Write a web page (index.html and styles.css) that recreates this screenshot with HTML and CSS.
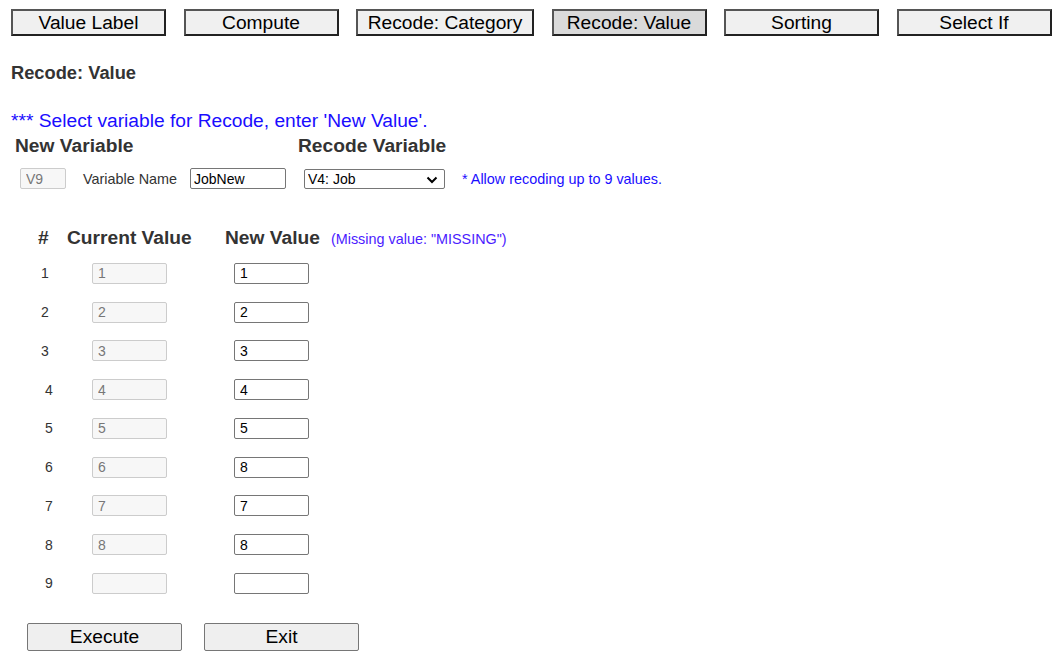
FILE: index.html
```html
<!DOCTYPE html>
<html lang="en">
<head>
    <meta charset="UTF-8">
    <meta name="viewport" content="width=device-width, initial-scale=1.0">
    <title>Recode: Value</title>
    <link rel="stylesheet" href="styles.css">
</head>
<body>
    <!-- Menu -->
    <div class="menu">
        <button class="menu-btn">Value Label</button>
        <button class="menu-btn">Compute</button>
        <button class="menu-btn wide">Recode: Category</button>
        <button class="menu-btn selected">Recode: Value</button>
        <button class="menu-btn">Sorting</button>
        <button class="menu-btn">Select If</button>
    </div>

    <h2 class="page-title">Recode: Value</h2>

    <p class="notice">*** Select variable for Recode, enter 'New Value'.</p>

    <div class="var-heads">
        <span class="head new-var">New Variable</span>
        <span class="head">Recode Variable</span>
    </div>

    <div class="var-row">
        <input type="text" class="var-id" value="V9" disabled>
        <label for="var-name" class="var-label">Variable Name</label>
        <input type="text" id="var-name" class="var-name" value="JobNew">
        <span class="select-wrap">
            <select class="var-select">
                <option>V4: Job</option>
            </select>
            <svg class="chevron" width="12" height="8" viewBox="0 0 12 8">
                <path d="M1.5 1.5 L6 6 L10.5 1.5" fill="none" stroke="#000" stroke-width="2"/>
            </svg>
        </span>
        <span class="hint">* Allow recoding up to 9 values.</span>
    </div>

    <!-- Recode table -->
    <div class="recode-head">
        <span class="head col-num">#</span>
        <span class="head col-cur">Current Value</span>
        <span class="head">New Value</span>
        <span class="missing">(Missing value: "MISSING")</span>
    </div>

    <div class="recode-rows">
        <div class="recode-row"><span class="num">1</span><input class="cur" value="1" disabled><input class="new" value="1"></div>
        <div class="recode-row"><span class="num">2</span><input class="cur" value="2" disabled><input class="new" value="2"></div>
        <div class="recode-row"><span class="num">3</span><input class="cur" value="3" disabled><input class="new" value="3"></div>
        <div class="recode-row"><span class="num shift">4</span><input class="cur" value="4" disabled><input class="new" value="4"></div>
        <div class="recode-row"><span class="num shift">5</span><input class="cur" value="5" disabled><input class="new" value="5"></div>
        <div class="recode-row"><span class="num shift">6</span><input class="cur" value="6" disabled><input class="new" value="8"></div>
        <div class="recode-row"><span class="num shift">7</span><input class="cur" value="7" disabled><input class="new" value="7"></div>
        <div class="recode-row"><span class="num shift">8</span><input class="cur" value="8" disabled><input class="new" value="8"></div>
        <div class="recode-row"><span class="num shift">9</span><input class="cur" value="" disabled><input class="new" value=""></div>
    </div>

    <div class="actions">
        <button class="action-btn">Execute</button>
        <button class="action-btn">Exit</button>
    </div>
</body>
</html>
```

FILE: styles.css
```css
body {
    font-family: "Liberation Sans", Arial, sans-serif;
    margin: 0;
    padding: 0;
    color: #333;
    background: #fff;
}

input, select, button {
    font-family: "Liberation Sans", Arial, sans-serif;
    box-sizing: border-box;
    margin: 0;
}

/* Top menu */
.menu {
    display: flex;
    gap: 17.5px;
    padding: 9px 0 0 11px;
}

.menu-btn {
    width: 155px;
    height: 27px;
    padding: 0;
    font-size: 19.2px;
    color: #000;
    background-color: #f0f0f0;
    border: 2px solid;
    border-color: #555 #222 #222 #555;
    border-radius: 0;
    line-height: 24px;
}

.menu-btn.wide {
    width: 178px;
}

.menu-btn.selected {
    background-color: #dadada;
}

.page-title {
    font-size: 18.3px;
    font-weight: bold;
    margin: 26px 0 0 11px;
    line-height: 21px;
}

.notice {
    color: #1a0dff;
    font-size: 19.2px;
    line-height: 22px;
    margin: 27px 0 0 11px;
}

.head {
    font-size: 19.2px;
    font-weight: bold;
    line-height: 21px;
}

.var-heads {
    display: flex;
    margin: 3px 0 0 15px;
}

.new-var {
    width: 283px;
}

.var-row {
    display: flex;
    align-items: center;
    margin: 12px 0 0 20px;
    font-size: 14.4px;
}

.var-id {
    width: 46px;
    height: 21px;
    padding: 0 5px;
    font-size: 14px;
    color: #777;
    background-color: #f7f7f7;
    border: 1px solid #ccc;
    border-radius: 2px;
}

.var-label {
    margin-left: 17px;
    width: 107px;
    color: #333;
}

.var-name {
    width: 96px;
    height: 21px;
    padding: 0 3px;
    font-size: 14px;
    color: #000;
    border: 1px solid #767676;
    border-radius: 2px;
}

.select-wrap {
    position: relative;
    display: flex;
    margin-left: 18px;
}

.var-select {
    appearance: none;
    -webkit-appearance: none;
    width: 141px;
    height: 20px;
    padding: 0 3px;
    font-size: 14px;
    color: #000;
    background-color: #fff;
    border: 1px solid #767676;
    border-radius: 2px;
}

.chevron {
    position: absolute;
    right: 7px;
    top: 7px;
    pointer-events: none;
}

.hint {
    margin-left: 17px;
    color: #1a0dff;
    font-size: 14.4px;
}

/* Recode table */
.recode-head {
    display: flex;
    align-items: baseline;
    margin: 38px 0 0 38px;
}

.col-num {
    width: 29px;
}

.col-cur {
    width: 158px;
}

.missing {
    margin-left: 11px;
    font-size: 14.4px;
    color: #4b1cff;
}

.recode-rows {
    margin-top: 6px;
}

.recode-row {
    display: flex;
    align-items: center;
    height: 38.75px;
    padding-left: 41px;
    font-size: 14px;
}

.num {
    width: 51px;
    color: #333;
}

.num.shift {
    padding-left: 4px;
    width: 47px;
}

.recode-row input {
    width: 75px;
    height: 21px;
    padding: 0 5px;
    font-size: 14px;
    border-radius: 2px;
}

.cur {
    color: #777;
    background-color: #f7f7f7;
    border: 1px solid #ccc;
}

.new {
    margin-left: 67px;
    color: #000;
    background-color: #fff;
    border: 1px solid #767676;
}

/* Bottom buttons */
.actions {
    display: flex;
    gap: 22px;
    margin: 20px 0 0 27px;
}

.action-btn {
    width: 155px;
    height: 28px;
    font-size: 19.2px;
    color: #000;
    background-color: #efefef;
    border: 1px solid #767676;
    border-radius: 2px;
}
```
